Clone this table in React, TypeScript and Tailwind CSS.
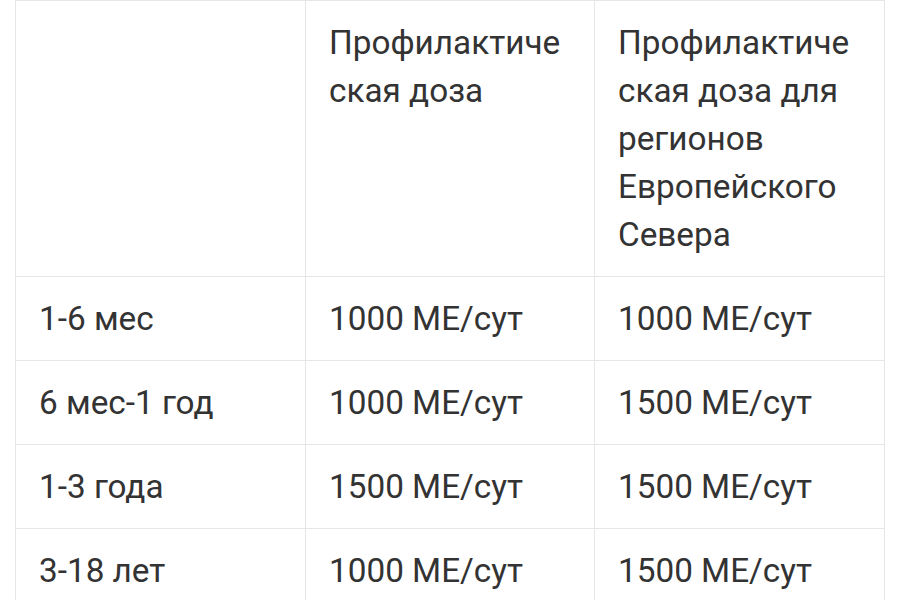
const rows = [
  ["1-6 мес", "1000 МЕ/сут", "1000 МЕ/сут"],
  ["6 мес-1 год", "1000 МЕ/сут", "1500 МЕ/сут"],
  ["1-3 года", "1500 МЕ/сут", "1500 МЕ/сут"],
  ["3-18 лет", "1000 МЕ/сут", "1500 МЕ/сут"],
];

export default function App() {
  return (
    <div
      className="h-[600px] w-[899px] overflow-hidden bg-white pl-[15px] text-[#333333]"
      style={{ fontFamily: "Roboto, 'Noto Sans', sans-serif" }}
    >
      <table className="w-[870px] table-fixed border-collapse text-[33.3px] leading-[48px]">
        <colgroup>
          <col className="w-[290px]" />
          <col className="w-[289px]" />
          <col className="w-[290px]" />
        </colgroup>
        <thead>
          <tr>
            <th className="border border-[#e6e6e6] px-[23px] py-[17.5px] text-left align-top font-normal" />
            <th className="border border-[#e6e6e6] px-[23px] py-[17.5px] text-left align-top font-normal wrap-anywhere">
              Профилактическая доза
            </th>
            <th className="border border-[#e6e6e6] px-[23px] py-[17.5px] text-left align-top font-normal wrap-anywhere">
              Профилактическая доза для регионов Европейского Севера
            </th>
          </tr>
        </thead>
        <tbody>
          {rows.map((row) => (
            <tr key={row[0]}>
              {row.map((cell, i) => (
                <td
                  key={i}
                  className="border border-[#e6e6e6] px-[23px] py-[17.5px] align-top"
                >
                  {cell}
                </td>
              ))}
            </tr>
          ))}
        </tbody>
      </table>
    </div>
  );
}
